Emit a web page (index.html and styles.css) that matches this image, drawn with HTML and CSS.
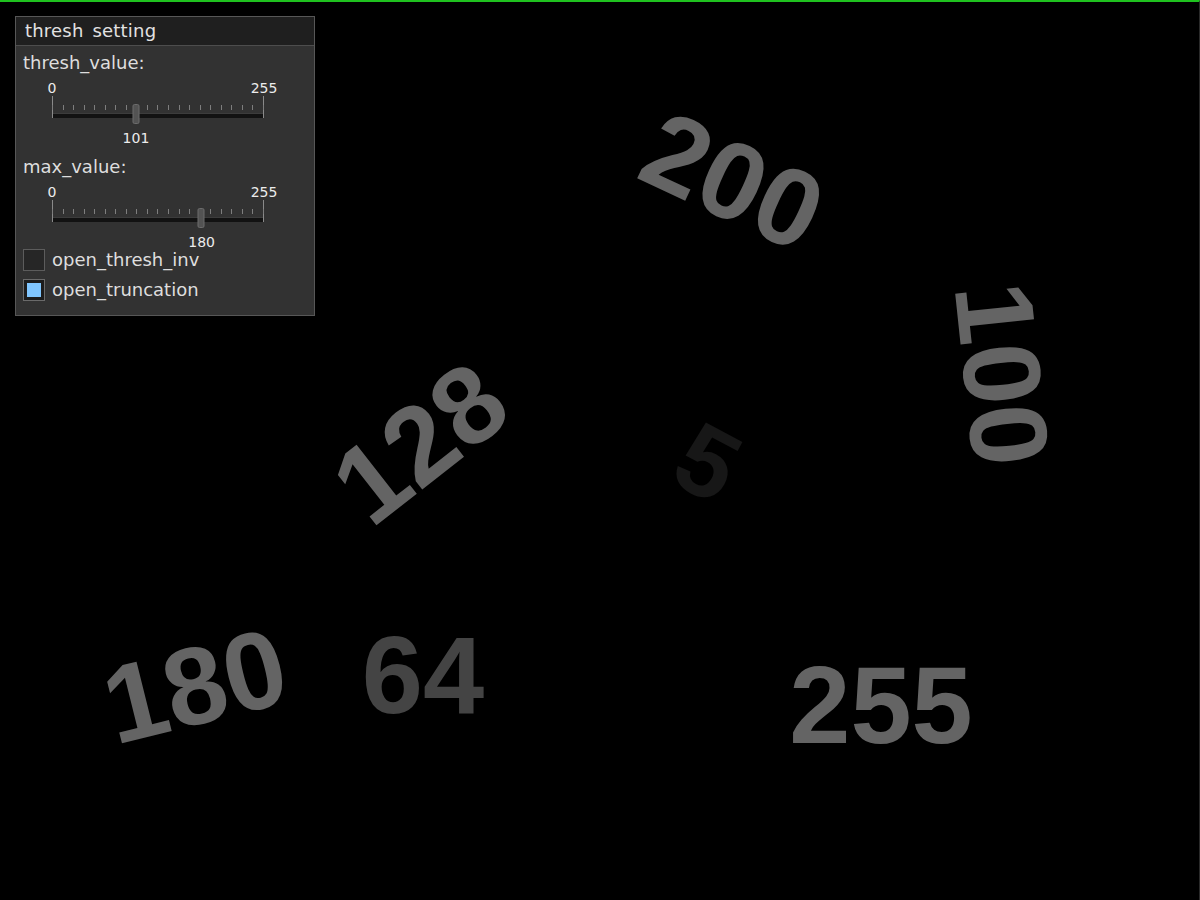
FILE: index.html
```html
<!DOCTYPE html>
<html>
<head>
<meta charset="utf-8">
<link rel="stylesheet" href="styles.css">
</head>
<body>
<div class="screen">
  <div class="panel">
    <div class="panel-title">thresh setting</div>
    <div class="panel-body">
      <div class="field-label">thresh_value:</div>
      <div class="slider">
        <div class="scale"><span>0</span><span>255</span></div>
        <div class="track-area">
          <div class="ticks">
            <i></i><i></i><i></i><i></i><i></i><i></i><i></i><i></i><i></i><i></i><i></i><i></i><i></i><i></i><i></i><i></i><i></i><i></i><i></i><i></i><i></i>
          </div>
          <div class="bar"></div>
          <div class="thumb" style="left: 39.6%"></div>
        </div>
        <div class="value-row"><span class="value" style="left: 39.6%">101</span></div>
      </div>
      <div class="field-label second">max_value:</div>
      <div class="slider">
        <div class="scale"><span>0</span><span>255</span></div>
        <div class="track-area">
          <div class="ticks">
            <i></i><i></i><i></i><i></i><i></i><i></i><i></i><i></i><i></i><i></i><i></i><i></i><i></i><i></i><i></i><i></i><i></i><i></i><i></i><i></i><i></i>
          </div>
          <div class="bar"></div>
          <div class="thumb" style="left: 70.6%"></div>
        </div>
        <div class="value-row last"><span class="value" style="left: 70.6%">180</span></div>
      </div>
      <div class="checks">
        <div class="check"><span class="box"></span><span class="check-label">open_thresh_inv</span></div>
        <div class="check"><span class="box on"><span class="fill"></span></span><span class="check-label">open_truncation</span></div>
      </div>
    </div>
  </div>

  <span class="num n200">200</span>
  <span class="num n100">100</span>
  <span class="num n128">128</span>
  <span class="num n5">5</span>
  <span class="num n180">180</span>
  <span class="num n64">64</span>
  <span class="num n255">255</span>
</div>
</body>
</html>
```

FILE: styles.css
```css
html, body {
  margin: 0;
  padding: 0;
  background: #000;
}

.screen {
  position: relative;
  width: 1200px;
  height: 900px;
  box-sizing: border-box;
  border-top: 2px solid #1fc21f;
  border-right: 1px solid #2a2a2a;
  background: #000;
  padding: 14px 0 0 15px;
  overflow: hidden;
  font-family: "DejaVu Sans", "Liberation Sans", sans-serif;
  color: #dcdcdc;
}

.panel {
  width: 300px;
  height: 300px;
  box-sizing: border-box;
  border: 1px solid #575757;
  background: #323232;
  display: flex;
  flex-direction: column;
}

.panel-title {
  height: 28px;
  line-height: 28px;
  background: #1f1f1f;
  border-bottom: 1px solid #4d4d4d;
  padding-left: 9px;
  font-size: 18px;
  color: #e2e2e2;
  letter-spacing: 0.2px;
  word-spacing: 3px;
}

.panel-body {
  padding: 0 7px;
  display: flex;
  flex-direction: column;
}

.field-label {
  margin-top: 8px;
  height: 18px;
  line-height: 18px;
  font-size: 18px;
  color: #dedede;
}

.field-label.second {
  margin-top: 12px;
}

.slider {
  margin-top: 8px;
  margin-left: 29px;
  width: 212px;
  display: flex;
  flex-direction: column;
}

.scale {
  display: flex;
  justify-content: space-between;
  margin: 0 -14px;
  height: 16px;
  line-height: 16px;
  font-size: 14px;
  color: #ececec;
}

.scale span {
  width: 28px;
  text-align: center;
}

.track-area {
  position: relative;
  height: 22px;
  border-left: 1px solid #8a8a8a;
  border-right: 1px solid #8a8a8a;
  box-sizing: border-box;
}

.ticks {
  position: absolute;
  left: -1px;
  right: -1px;
  top: 9px;
  height: 5px;
  display: flex;
  justify-content: space-between;
}

.ticks i {
  display: block;
  width: 1px;
  height: 5px;
  background: #7e7e7e;
}

.bar {
  position: absolute;
  left: 0;
  right: 0;
  bottom: 0;
  height: 4px;
  background: #121212;
  border-top: 1px solid #3c3c3c;
}

.thumb {
  position: absolute;
  top: 8px;
  width: 5px;
  height: 18px;
  transform: translateX(-50%);
  background: #535353;
  border: 1px solid #6c6c6c;
  border-radius: 2px;
}

.value-row {
  position: relative;
  margin-top: 12px;
  height: 16px;
  line-height: 16px;
  font-size: 14px;
  color: #ececec;
}

.value-row.last {
  height: 15px;
}

.value {
  position: absolute;
  top: 0;
  transform: translateX(-50%);
}

.checks {
  display: flex;
  flex-direction: column;
  gap: 8px;
}

.check {
  display: flex;
  align-items: center;
  gap: 7px;
  height: 22px;
}

.box {
  width: 22px;
  height: 22px;
  box-sizing: border-box;
  border: 1px solid #5c5c5c;
  background: #262626;
  padding: 3px;
  display: flex;
}

.box.on {
  background: #1c1c1c;
  border-color: #6a6a6a;
}

.fill {
  flex: 1;
  background: #80c6ff;
}

.check-label {
  font-size: 18px;
  line-height: 22px;
  color: #dedede;
}

.num {
  position: absolute;
  font-family: "Liberation Sans", Arial, sans-serif;
  font-weight: bold;
  font-size: 110px;
  line-height: 1;
  color: #646464;
  white-space: nowrap;
}

.n200 { left: 733px; top: 179px; transform: translate(-50%, -50%) rotate(25deg); }
.n100 { left: 1002px; top: 372px; transform: translate(-50%, -50%) rotate(84deg); }
.n128 { left: 420px; top: 441px; transform: translate(-50%, -50%) rotate(-38deg); }
.n5   { left: 708px; top: 460px; transform: translate(-50%, -50%) rotate(28deg); color: #171717; font-size: 100px; }
.n180 { left: 195px; top: 684px; transform: translate(-50%, -50%) rotate(-14deg); }
.n64  { left: 423px; top: 673px; transform: translate(-50%, -50%); color: #444444; }
.n255 { left: 881px; top: 703px; transform: translate(-50%, -50%); }
```
